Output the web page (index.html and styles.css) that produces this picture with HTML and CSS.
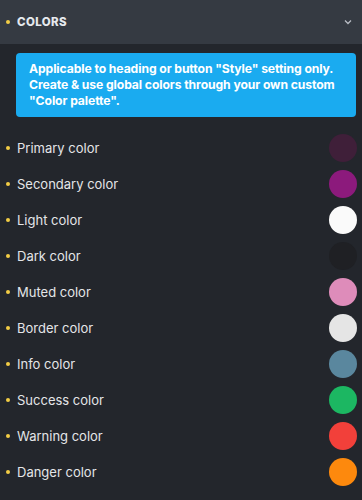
FILE: index.html
```html
<!DOCTYPE html>
<html lang="en">
<head>
    <meta charset="UTF-8">
    <meta name="viewport" content="width=device-width, initial-scale=1.0">
    <title>Colors</title>
    <link rel="stylesheet" href="styles.css">
</head>
<body>
    <div class="panel">
        <div class="panel-header">
            <span class="dot"></span>
            <span class="panel-title">Colors</span>
            <svg class="chevron" width="8" height="6" viewBox="0 0 8 6">
                <path d="M1 1.5 L4 4.5 L7 1.5" fill="none" stroke="#b8bcc4" stroke-width="1.3"/>
            </svg>
        </div>
        <div class="panel-body">
            <div class="notice">Applicable to heading or button "Style" setting only. Create &amp; use global colors through your own custom "Color palette".</div>
            <ul class="color-list">
                <li class="color-row"><span class="dot"></span><span class="label">Primary color</span><span class="swatch primary"></span></li>
                <li class="color-row"><span class="dot"></span><span class="label">Secondary color</span><span class="swatch secondary"></span></li>
                <li class="color-row"><span class="dot"></span><span class="label">Light color</span><span class="swatch light"></span></li>
                <li class="color-row"><span class="dot"></span><span class="label">Dark color</span><span class="swatch dark"></span></li>
                <li class="color-row"><span class="dot"></span><span class="label">Muted color</span><span class="swatch muted"></span></li>
                <li class="color-row"><span class="dot"></span><span class="label">Border color</span><span class="swatch border"></span></li>
                <li class="color-row"><span class="dot"></span><span class="label">Info color</span><span class="swatch info"></span></li>
                <li class="color-row"><span class="dot"></span><span class="label">Success color</span><span class="swatch success"></span></li>
                <li class="color-row"><span class="dot"></span><span class="label">Warning color</span><span class="swatch warning"></span></li>
                <li class="color-row"><span class="dot"></span><span class="label">Danger color</span><span class="swatch danger"></span></li>
            </ul>
        </div>
    </div>
</body>
</html>
```

FILE: styles.css
```css
* {
    margin: 0;
    padding: 0;
    box-sizing: border-box;
}

body {
    font-family: 'Inter', 'Liberation Sans', sans-serif;
    background: #23262c;
    color: #e3e5e8;
    width: 362px;
    min-height: 500px;
}

.panel-header {
    display: flex;
    align-items: center;
    height: 44px;
    padding: 0 8px 0 6px;
    background: #353a42;
}

.dot {
    width: 4px;
    height: 4px;
    border-radius: 50%;
    background: #f2cd45;
    flex-shrink: 0;
}

.panel-title {
    margin-left: 7px;
    font-size: 11.5px;
    font-weight: 800;
    letter-spacing: 0.4px;
    text-transform: uppercase;
    color: #e6e9ee;
    flex: 1;
}

.chevron {
    margin-right: 2px;
}

.panel-body {
    padding: 9px 6px 0 0;
}

.notice {
    margin-left: 16px;
    padding: 8px 10px 8px 13px;
    background: #1aabf0;
    border-radius: 4px;
    color: #ffffff;
    font-size: 12.2px;
    font-weight: 700;
    line-height: 16px;
    letter-spacing: -0.1px;
}

.color-list {
    list-style: none;
    margin-top: 13px;
}

.color-row {
    display: flex;
    align-items: center;
    height: 36px;
    padding-left: 6px;
}

.label {
    margin-left: 7px;
    font-size: 13px;
    color: #e3e5e8;
    flex: 1;
}

.swatch {
    width: 28px;
    height: 28px;
    border-radius: 50%;
    margin-right: -1px;
}

.swatch.primary { background: #3f1f39; }
.swatch.secondary { background: #8c1a7c; }
.swatch.light { background: #fafafa; }
.swatch.dark { background: #1f2024; }
.swatch.muted { background: #de8cba; }
.swatch.border { background: #e5e5e5; }
.swatch.info { background: #5a879e; }
.swatch.success { background: #1cb762; }
.swatch.warning { background: #f2403a; }
.swatch.danger { background: #fd890d; }
```
